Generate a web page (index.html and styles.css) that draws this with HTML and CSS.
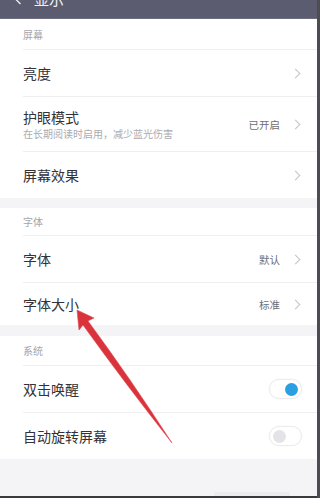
FILE: index.html
```html
<!DOCTYPE html>
<html lang="zh">
<head>
<meta charset="utf-8">
<link rel="stylesheet" href="styles.css">
</head>
<body>
<div class="screen">
  <div class="header">
    <div class="header-inner">
      <svg class="back" width="8" height="12" viewBox="0 0 8 12"><path d="M6.5 1 L1.5 6 L6.5 11" fill="none" stroke="#e8e8ee" stroke-width="1.4"/></svg>
      <span class="title">显示</span>
    </div>
  </div>
  <div class="content">
    <div class="group">
      <div class="label first">屏幕</div>
      <div class="row"><span class="name">亮度</span><span class="right"><i class="chev"></i></span></div>
      <div class="row tall">
        <div class="texts"><span class="name">护眼模式</span><span class="sub">在长期阅读时启用，减少蓝光伤害</span></div>
        <span class="right"><span class="val">已开启</span><i class="chev"></i></span>
      </div>
      <div class="row last"><span class="name">屏幕效果</span><span class="right"><i class="chev"></i></span></div>
    </div>
    <div class="band"></div>
    <div class="group">
      <div class="label">字体</div>
      <div class="row"><span class="name">字体</span><span class="right"><span class="val">默认</span><i class="chev"></i></span></div>
      <div class="row short last"><span class="name">字体大小</span><span class="right"><span class="val">标准</span><i class="chev"></i></span></div>
    </div>
    <div class="band b2"></div>
    <div class="group">
      <div class="label l3">系统</div>
      <div class="row"><span class="name">双击唤醒</span><span class="right"><span class="toggle on"><span class="knob"></span></span></span></div>
      <div class="row last"><span class="name">自动旋转屏幕</span><span class="right"><span class="toggle"><span class="knob"></span></span></span></div>
    </div>
    <div class="footer"></div>
  </div>
  <div class="bottombar"><span class="home"></span></div>
  <svg class="arrow" width="320" height="498" viewBox="0 0 320 498">
    <path d="M77 310 L94 318 L88 321 Q130 378 172 443 Q124 382 83 325 L79 330 Z" fill="#d9333b" stroke="#e04a50" stroke-width="0.6" stroke-linejoin="round"/>
  </svg>
</div>
</body>
</html>
```

FILE: styles.css
```css
* { box-sizing: border-box; }
html, body { margin: 0; padding: 0; }
body {
  width: 320px;
  height: 498px;
  overflow: hidden;
  font-family: "Noto Sans CJK SC", "Noto Sans", sans-serif;
  background: #f4f3f6;
}
.screen {
  position: relative;
  width: 320px;
  height: 498px;
  display: flex;
  flex-direction: column;
  border-right: 3px solid #4c4c52;
}
.header {
  height: 19px;
  flex: none;
  background: #5b5c6f;
  border-bottom: 1px solid #6c6d80;
  overflow: hidden;
}
.header-inner {
  display: flex;
  align-items: center;
  height: 20px;
  margin-top: -11px;
  padding-left: 14px;
  gap: 12px;
}
.title {
  color: #f0f0f4;
  font-size: 15px;
  line-height: 20px;
}
.content {
  flex: 1;
  display: flex;
  flex-direction: column;
}
.group { background: #fff; padding-left: 23px; }
.label {
  height: 28px;
  display: flex;
  align-items: center;
  font-size: 10px;
  color: #a5a4aa;
  border-bottom: 1px solid #efeef1;
}
.label.first { height: 31px; }
.label.l3 { height: 30px; }
.row {
  height: 47px;
  display: flex;
  align-items: center;
  justify-content: space-between;
  padding-right: 15px;
  border-bottom: 1px solid #efeef1;
}
.row.tall { height: 55px; }
.row.short { height: 42px; }
.row.last { border-bottom: none; height: 46px; }
.row.short.last { height: 42px; }
.name {
  font-size: 14px;
  color: #333238;
}
.texts { display: flex; flex-direction: column; gap: 1px; }
.texts .name { line-height: 18px; }
.sub {
  font-size: 10px;
  color: #acabb1;
  line-height: 14px;
}
.right { display: flex; align-items: center; gap: 12px; }
.val { font-size: 10.5px; color: #6f6e74; }
.chev {
  display: block;
  width: 7px;
  height: 7px;
  border-top: 1px solid #c4c3c8;
  border-right: 1px solid #c4c3c8;
  transform: rotate(45deg);
  margin-right: 3px;
}
.band { height: 10px; background: #f4f3f6; }
.band.b2 { height: 11px; }
.toggle {
  width: 33px;
  height: 20px;
  border-radius: 10px;
  border: 1px solid #ececef;
  background: #fff;
  display: flex;
  align-items: center;
  padding: 0 3px;
  box-shadow: 0 0 2px rgba(0,0,0,0.06);
}
.toggle .knob {
  width: 13px;
  height: 13px;
  border-radius: 50%;
  background: #e4e3e7;
}
.toggle.on { justify-content: flex-end; }
.toggle.on .knob { background: #2b9fe2; }
.footer { flex: 1; background: #f4f3f6; }
.bottombar {
  height: 2px;
  flex: none;
  background: #3a3a3e;
  position: relative;
}
.home {
  position: absolute;
  left: 214px;
  top: -4px;
  width: 76px;
  height: 4px;
  background: #ececee;
  border-radius: 2px 2px 0 0;
}
.arrow {
  position: absolute;
  left: 0;
  top: 0;
  pointer-events: none;
}
```
